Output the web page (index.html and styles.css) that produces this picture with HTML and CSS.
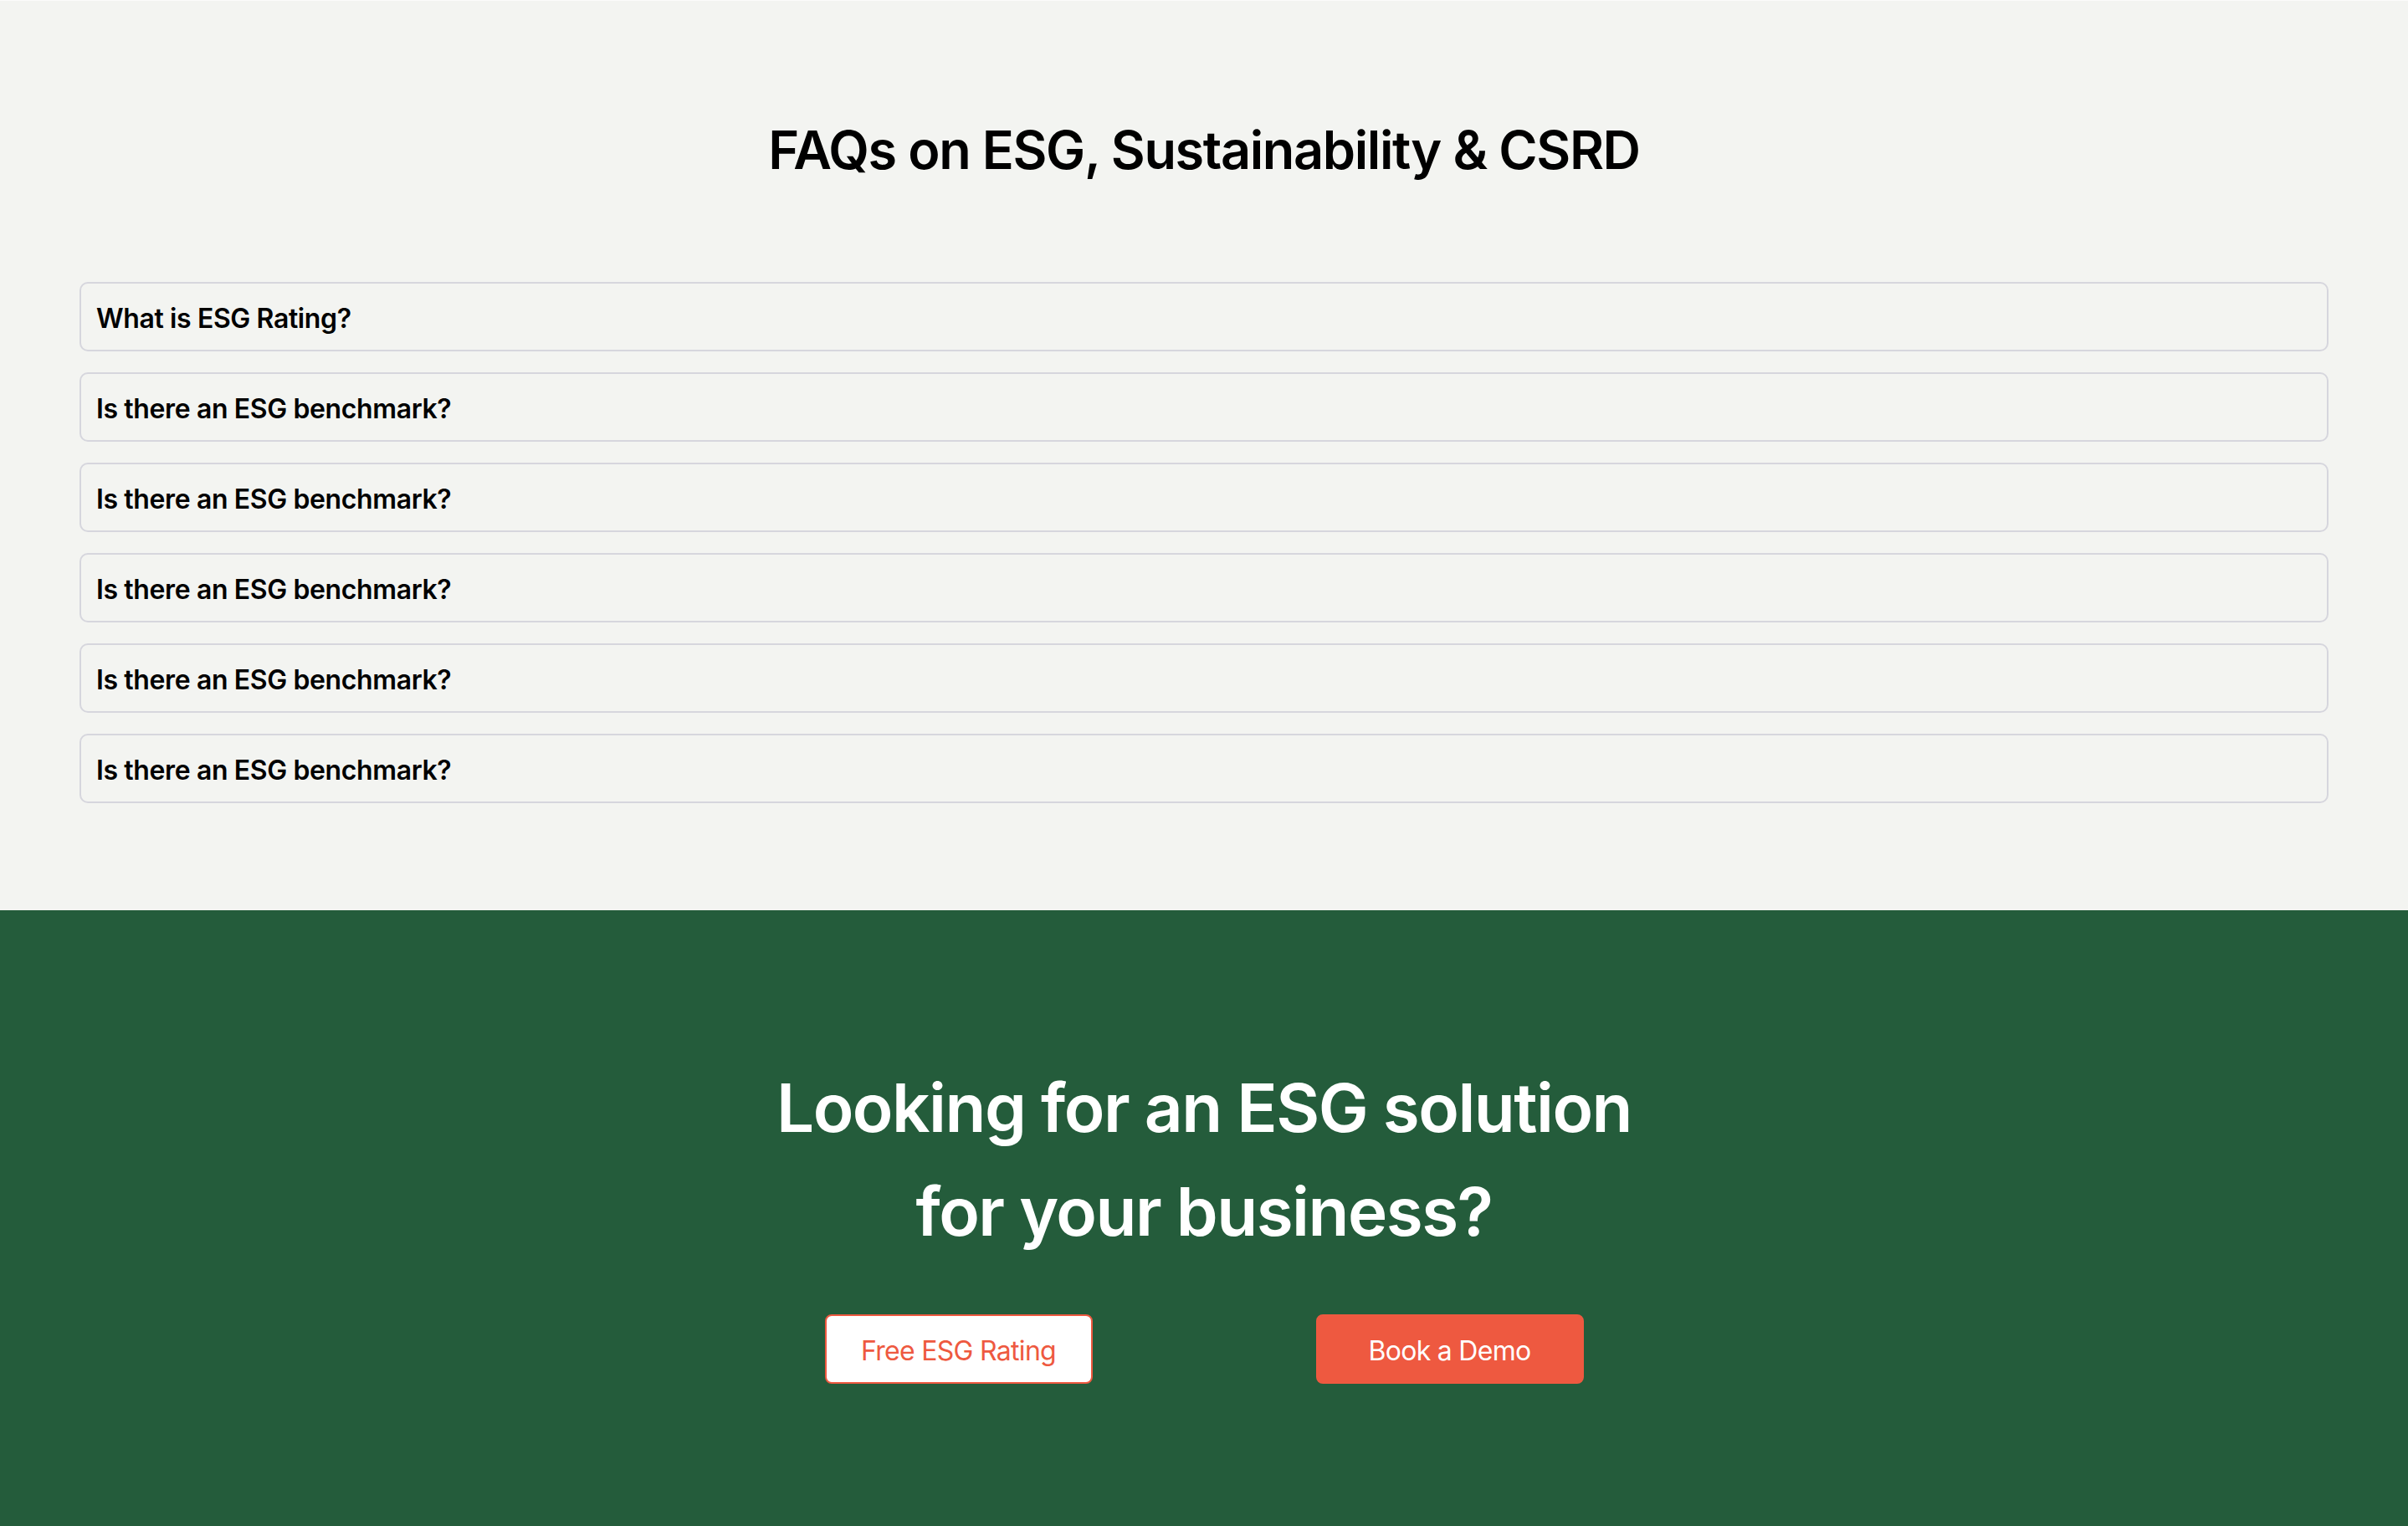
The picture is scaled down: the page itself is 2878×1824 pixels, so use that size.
FILE: index.html
```html
<!DOCTYPE html>
<html lang="en">
<head>
<meta charset="utf-8">
<title>FAQs on ESG, Sustainability &amp; CSRD</title>
<link rel="stylesheet" href="styles.css">
</head>
<body>
<section class="faq">
  <h2 class="faq-title">FAQs on ESG, Sustainability &amp; CSRD</h2>
  <div class="faq-list">
    <div class="faq-item">What is ESG Rating?</div>
    <div class="faq-item">Is there an ESG benchmark?</div>
    <div class="faq-item">Is there an ESG benchmark?</div>
    <div class="faq-item">Is there an ESG benchmark?</div>
    <div class="faq-item">Is there an ESG benchmark?</div>
    <div class="faq-item">Is there an ESG benchmark?</div>
  </div>
</section>
<section class="cta">
  <h2 class="cta-title">Looking for an ESG solution<br>for your business?</h2>
  <div class="cta-buttons">
    <a class="btn btn-outline" href="#">Free ESG Rating</a>
    <a class="btn btn-solid" href="#">Book a Demo</a>
  </div>
</section>
</body>
</html>
```
FILE: styles.css
```css
html, body {
  margin: 0;
  padding: 0;
}
body {
  font-family: Inter, "Noto Sans", "Liberation Sans", sans-serif;
  background: #245c3b;
  color: #000;
}
.faq {
  background: #f3f4f1;
  border-top: 1px solid #fbfbfa;
  padding: 140px 95px 128px;
}
.faq-title {
  margin: 0 0 119px;
  text-align: center;
  font-size: 63px;
  line-height: 77px;
  font-weight: 600;
  letter-spacing: -0.022em;
  color: #000;
}
.faq-list {
  display: flex;
  flex-direction: column;
  gap: 25px;
}
.faq-item {
  box-sizing: border-box;
  height: 83px;
  display: flex;
  align-items: center;
  padding: 3px 18px 0;
  border: 2px solid #d6d6dd;
  border-radius: 10px;
  font-size: 32px;
  font-weight: 600;
  letter-spacing: -0.012em;
  color: #000;
}
.cta {
  background: #245c3b;
  padding: 174px 0 167px;
  display: flex;
  flex-direction: column;
  align-items: center;
}
.cta-title {
  margin: 0 0 61px;
  text-align: center;
  color: #fff;
  font-size: 80px;
  line-height: 124px;
  font-weight: 600;
  letter-spacing: -0.019em;
}
.cta-buttons {
  display: flex;
  gap: 267px;
}
.btn {
  box-sizing: border-box;
  width: 320px;
  height: 83px;
  display: flex;
  align-items: center;
  justify-content: center;
  padding-top: 3px;
  border-radius: 8px;
  font-size: 32px;
  font-weight: 400;
  letter-spacing: -0.022em;
  text-decoration: none;
}
.btn-outline {
  background: #fff;
  border: 2px solid #ee5940;
  color: #ee5940;
}
.btn-solid {
  background: #ee5940;
  border: 2px solid #ee5940;
  color: #fff;
}
```
